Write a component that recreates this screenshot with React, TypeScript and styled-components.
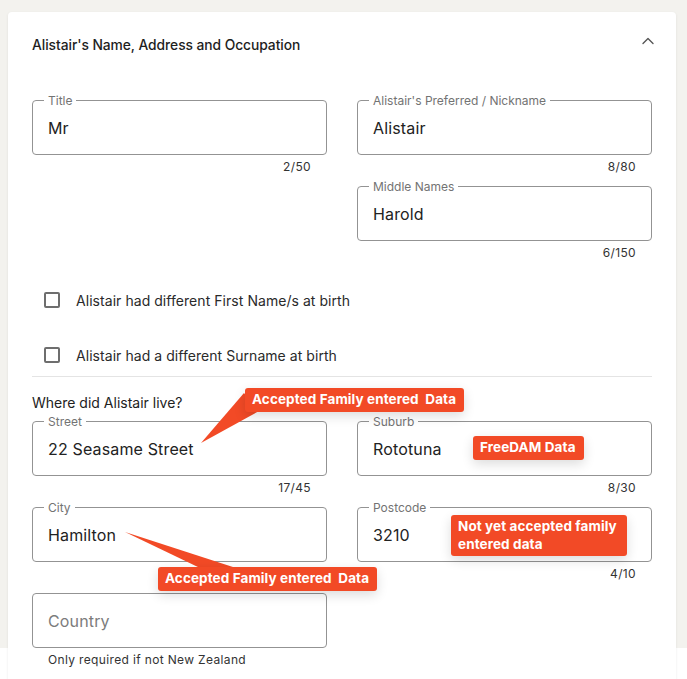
import styled, { createGlobalStyle } from "styled-components";
import { ChevronUp } from "lucide-react";

const GlobalStyle = createGlobalStyle`
  body {
    margin: 0;
    font-family: Inter, "Noto Sans", sans-serif;
    color: #222;
    background: linear-gradient(#f3f2ee 648px, #fff 648px);
  }
`;

const Page = styled.div`
  padding: 12px 0 0 8px;
`;

const Card = styled.section`
  position: relative;
  width: 668px;
  background: #fff;
  border-radius: 4px;
  box-shadow: 0 1px 3px rgba(0, 0, 0, 0.08);
  padding-bottom: 40px;
`;

const Header = styled.header`
  height: 66px;
  display: flex;
  align-items: center;
  justify-content: space-between;
  padding: 0 18px 0 24px;
`;

const HeaderTitle = styled.h2`
  margin: 0;
  font-size: 13.8px;
  font-weight: 500;
  letter-spacing: -0.05px;
  color: #1e1e1e;
`;

const Toggle = styled.span`
  display: flex;
  color: #555;
  margin-bottom: 8px;
`;

const Body = styled.div`
  padding: 15px 24px 0 24px;
`;

const Grid = styled.div`
  display: grid;
  grid-template-columns: 295px 295px;
  column-gap: 30px;
  align-items: start;
`;

const Stack = styled.div`
  display: flex;
  flex-direction: column;
  gap: 4px;
`;

const Fieldset = styled.fieldset`
  margin: 0;
  padding: 0 11px;
  border: 1px solid #939393;
  border-radius: 4px;
  min-width: 0;
`;

const Legend = styled.legend<{ $empty?: boolean }>`
  padding: ${(p) => (p.$empty ? "0" : "0 4px")};
  font-size: 12px;
  line-height: 14px;
  height: 14px;
  color: #737373;
  transform: translateY(1px);
`;

const Value = styled.div<{ $placeholder?: boolean }>`
  height: 42px;
  padding: 0 4px 5px;
  display: flex;
  align-items: center;
  font-size: 16px;
  letter-spacing: 0.15px;
  color: ${(p) => (p.$placeholder ? "#7c7c7c" : "#222")};
`;

const Helper = styled.div<{ $align?: "left" | "right" }>`
  margin-top: 4px;
  height: 16px;
  line-height: 16px;
  font-size: 12px;
  color: #333;
  letter-spacing: 0.35px;
  text-align: ${(p) => p.$align ?? "right"};
  padding: 0 16px;
`;

const CheckList = styled.div`
  margin-top: 18px;
  display: flex;
  flex-direction: column;
  gap: 13px;
  border-bottom: 1px solid #e4e4e4;
`;

const CheckRow = styled.label`
  height: 42px;
  display: flex;
  align-items: center;
  gap: 16px;
  padding-left: 12px;
  font-size: 14px;
  letter-spacing: 0.05px;
  color: #2a2a2a;
`;

const Box = styled.span`
  width: 16px;
  height: 16px;
  box-sizing: border-box;
  border: 2px solid #6e6e6e;
  border-radius: 2px;
`;

const SectionLabel = styled.p`
  margin: 17px 0 2px;
  font-size: 14px;
  line-height: 18px;
  color: #222;
`;

const Overlay = styled.svg`
  position: absolute;
  inset: 0;
  width: 100%;
  height: 100%;
  pointer-events: none;
  overflow: visible;
`;

const Tag = styled.div<{ $x: number; $y: number; $w?: number }>`
  position: absolute;
  left: ${(p) => p.$x}px;
  top: ${(p) => p.$y}px;
  width: ${(p) => (p.$w ? `${p.$w}px` : "auto")};
  box-sizing: border-box;
  padding: 3px 8px 3px 7px;
  background: #f24a26;
  color: #fff;
  font-size: 13.5px;
  font-weight: 700;
  letter-spacing: 0.1px;
  line-height: 17.5px;
  border-radius: 3px;
  white-space: ${(p) => (p.$w ? "normal" : "pre")};
  box-shadow: 0 4px 12px rgba(0, 0, 0, 0.14);
`;

type FieldProps = {
  label?: string;
  value?: string;
  placeholder?: string;
  count?: string;
  hint?: string;
};

function TextField({ label, value, placeholder, count, hint }: FieldProps) {
  return (
    <div>
      <Fieldset>
        <Legend $empty={!label}>{label}</Legend>
        <Value $placeholder={!value}>{value || placeholder}</Value>
      </Fieldset>
      {hint ? (
        <Helper $align="left">{hint}</Helper>
      ) : (
        <Helper>{count}</Helper>
      )}
    </div>
  );
}

const CARD_X = 8;
const CARD_Y = 12;
const pts = (list: [number, number][]) =>
  list.map(([x, y]) => `${x - CARD_X},${y - CARD_Y}`).join(" ");

export default function App() {
  return (
    <>
      <GlobalStyle />
      <Page>
        <Card>
          <Header>
            <HeaderTitle>Alistair's Name, Address and Occupation</HeaderTitle>
            <Toggle>
              <ChevronUp size={20} strokeWidth={1.6} />
            </Toggle>
          </Header>

          <Body>
            <Grid>
              <Stack>
                <TextField label="Title" value="Mr" count="2/50" />
              </Stack>
              <Stack>
                <TextField label="Alistair's Preferred / Nickname" value="Alistair" count="8/80" />
                <TextField label="Middle Names" value="Harold" count="6/150" />
              </Stack>
            </Grid>

            <CheckList>
              <CheckRow>
                <Box />
                Alistair had different First Name/s at birth
              </CheckRow>
              <CheckRow>
                <Box />
                Alistair had a different Surname at birth
              </CheckRow>
            </CheckList>

            <SectionLabel>Where did Alistair live?</SectionLabel>
            <Grid>
              <Stack>
                <TextField label="Street" value="22 Seasame Street" count="17/45" />
                <TextField label="City" value="Hamilton" />
                <TextField placeholder="Country" hint="Only required if not New Zealand" />
              </Stack>
              <Stack>
                <TextField label="Suburb" value="Rototuna" count="8/30" />
                <TextField label="Postcode" value="3210" count="4/10" />
              </Stack>
            </Grid>
          </Body>

          {/* data-source callouts */}
          <Overlay>
            <polygon points={pts([[244, 393], [259, 411], [201, 443]])} fill="#f24a26" />
            <polygon points={pts([[125, 532], [200, 568], [236, 568]])} fill="#f24a26" />
          </Overlay>
          <Tag $x={245 - CARD_X} $y={388 - CARD_Y}>Accepted Family entered  Data</Tag>
          <Tag $x={473 - CARD_X} $y={436 - CARD_Y}>FreeDAM Data</Tag>
          <Tag $x={451 - CARD_X} $y={515 - CARD_Y} $w={176}>Not yet accepted family entered data</Tag>
          <Tag $x={158 - CARD_X} $y={567 - CARD_Y}>Accepted Family entered  Data</Tag>
        </Card>
      </Page>
    </>
  );
}
